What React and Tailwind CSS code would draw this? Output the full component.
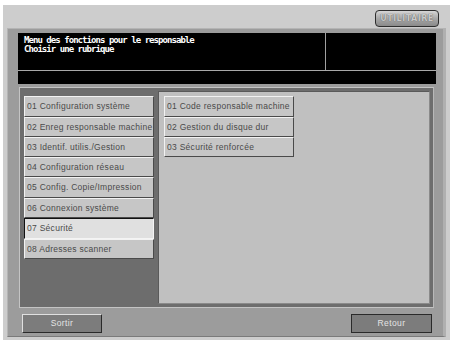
import React from "react";

const leftItems = [
  "01 Configuration système",
  "02 Enreg responsable machine",
  "03 Identif. utilis./Gestion",
  "04 Configuration réseau",
  "05 Config. Copie/Impression",
  "06 Connexion système",
  "07 Sécurité",
  "08 Adresses scanner",
];

const leftHeights = ["h-[21px]", "h-[20px]", "h-[20px]", "h-[20px]", "h-[21px]", "h-[20px]", "h-[21px]", "h-[20px]"];

const rightItems = [
  "01 Code responsable machine",
  "02 Gestion du disque dur",
  "03 Sécurité renforcée",
];

const btnFont = { fontFamily: '"Liberation Sans", Arial, sans-serif' };

function MenuButton({ label, selected, h = "h-[20px]" }) {
  return (
    <div
      className={
        h +
        " w-[130px] flex items-center pl-[2px] overflow-hidden whitespace-nowrap text-[8.5px] tracking-[0.28px] text-[#4a4a4a] border " +
        (selected
          ? "bg-[#e0e0e0] border-t-[#111] border-l-[#111] border-b-[#f4f4f4] border-r-[#f4f4f4]"
          : "bg-[#c6c6c6] border-t-[#f2f2f2] border-l-[#f2f2f2] border-b-[#4a4a4a] border-r-[#4a4a4a]")
      }
      style={btnFont}
    >
      {label}
    </div>
  );
}

export default function App() {
  return (
    <div className="w-[454px] h-[340px] bg-white overflow-hidden relative">
      <div className="absolute left-[3px] top-[5px] w-[447px] h-[335px] bg-[#cdcdcd]">
        {/* top bar */}
        <div className="h-[23px] flex items-start justify-end pr-[11px] pt-[5px]">
          <div
            className="w-[64px] h-[17px] rounded-[4px] border-[1.5px] border-[#2e2e2e] bg-gradient-to-b from-[#d6d6d6] via-[#a8a8a8] to-[#8a8a8a] flex items-center justify-center text-[8px] font-bold text-[#c8c8c8] tracking-[0.5px]"
            style={{ fontFamily: '"DejaVu Sans", sans-serif', textShadow: "0 0 1px #444" }}
          >
            UTILITAIRE
          </div>
        </div>
        {/* frame */}
        <div className="ml-[4px] w-[439px] h-[309px] bg-[#9c9c9c] border-l border-t border-l-[#b4b4b4] border-t-[#b4b4b4] border-r-[3px] border-r-[#b0b0b0] border-b border-b-[#7a7a7a] flex flex-col">
          {/* header */}
          <div className="ml-[10px] mt-[4px] w-[418px] h-[51px] bg-black flex flex-col">
            <div className="flex h-[37px]">
              <div
                className="w-[307px] pl-[6px] pt-[3px] text-white font-bold text-[9px] leading-[9px] tracking-[-0.95px]"
                style={{ fontFamily: '"DejaVu Sans Mono", monospace' }}
              >
                <div>Menu des fonctions pour le responsable</div>
                <div>Choisir une rubrique</div>
              </div>
              <div className="w-[1px] bg-[#a0a0a0]" />
              <div className="flex-1" />
            </div>
            <div className="h-[1px] bg-[#a8a8a8]" />
            <div className="flex-1" />
          </div>
          {/* main container */}
          <div className="ml-[11px] mt-[3px] w-[415px] h-[221px] bg-[#6d6d6d] border border-[#c4c4c4] border-r-[#b8b8b8] flex pt-[3px] pr-[3px] pb-[3px] pl-[4px] gap-[4px]">
            <div className="flex flex-col pt-[5px]">
              {leftItems.map((l, i) => (
                <MenuButton key={l} label={l} selected={i === 6} h={leftHeights[i]} />
              ))}
            </div>
            <div className="flex-1 bg-[#c0c0c0] border border-[#8a8a8a] border-t-[#5a5a5a] border-l-[#5a5a5a] pt-[4px] pl-[5px] flex flex-col">
              {rightItems.map((l, i) => (
                <MenuButton key={l} label={l} h={i === 0 ? "h-[21px]" : "h-[20px]"} />
              ))}
            </div>
          </div>
          {/* bottom buttons */}
          <div className="flex justify-between ml-[14px] mr-[11px] mt-[6px]">
            <div
              className="w-[80px] h-[19px] bg-[#7c7c7c] border border-t-[#e0e0e0] border-l-[#e0e0e0] border-b-[#2a2a2a] border-r-[#2a2a2a] flex items-center justify-center text-[8.5px] tracking-[0.4px] text-[#e4e4e4]"
              style={btnFont}
            >
              Sortir
            </div>
            <div
              className="w-[81px] h-[19px] bg-[#7c7c7c] border border-t-[#2a2a2a] border-l-[#2a2a2a] border-b-[#2a2a2a] border-r-[#2a2a2a] flex items-center justify-center text-[8.5px] tracking-[0.4px] text-[#e4e4e4]"
              style={btnFont}
            >
              Retour
            </div>
          </div>
        </div>
      </div>
    </div>
  );
}
